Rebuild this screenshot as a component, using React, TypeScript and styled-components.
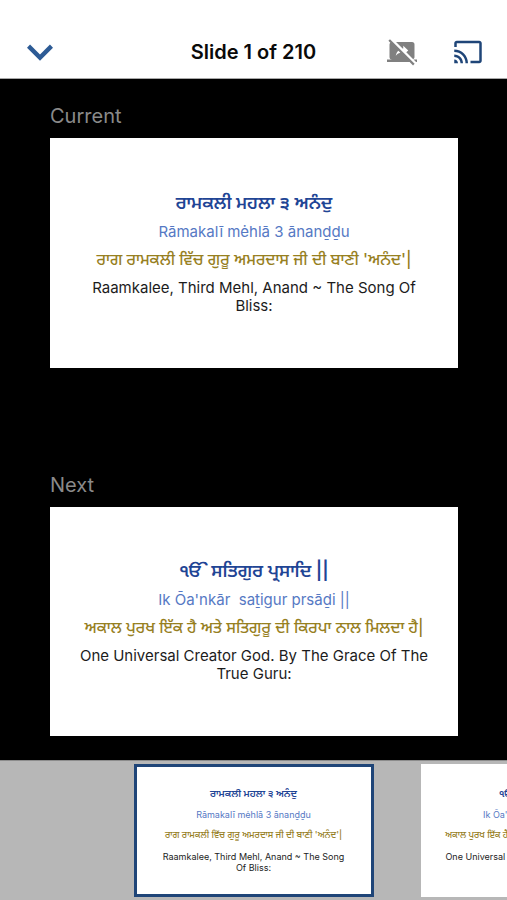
import React from "react";
import styled, { createGlobalStyle } from "styled-components";
import { MdCast, MdExpandMore, MdStopScreenShare } from "react-icons/md";

const GlobalStyle = createGlobalStyle`
  *, *::before, *::after { box-sizing: border-box; }
  body {
    margin: 0;
    background: #000;
    font-family: Inter, "Noto Sans", "Noto Sans Gurmukhi", sans-serif;
  }
`;

const Page = styled.main`
  display: flex;
  flex-direction: column;
  min-height: 100vh;
`;

const Header = styled.header`
  display: grid;
  grid-template-columns: 1fr auto 1fr;
  align-items: center;
  padding: 26px 14px 0;
  height: 79px;
  background: #fff;
  border-bottom: 1px solid #a8a8a8;
`;

const Title = styled.h1`
  margin: 0;
  font-size: 20px;
  line-height: 24px;
  font-weight: 600;
  color: #0a0a0a;
`;

const Actions = styled.div`
  display: flex;
  justify-content: flex-end;
  gap: 36px;
  padding-right: 10px;
`;

const IconButton = styled.button<{ $color: string }>`
  display: flex;
  justify-self: start;
  padding: 0;
  border: 0;
  background: none;
  color: ${(p) => p.$color};
  cursor: pointer;
`;

const Stage = styled.div`
  flex: 1;
  display: flex;
  flex-direction: column;
  justify-content: space-between;
  gap: 24px;
  padding: 25px 49px 24px 50px;
`;

const Preview = styled.section`
  display: flex;
  flex-direction: column;
  gap: 10px;
`;

const PreviewLabel = styled.h2`
  margin: 0;
  font-size: 20px;
  line-height: 24px;
  font-weight: 400;
  color: #8a8a8a;
`;

const SlideCard = styled.article`
  display: flex;
  flex-direction: column;
  justify-content: center;
  aspect-ratio: 16 / 9;
  padding: 0 24px;
  background: #fff;
  text-align: center;
`;

type Size = { $small?: boolean };

const Line = styled.p<Size>`
  margin: 0;
  font-size: ${(p) => (p.$small ? 9 : 15)}px;
  line-height: ${(p) => (p.$small ? 11 : 18)}px;
`;

const Gurmukhi = styled(Line)`
  font-size: ${(p) => (p.$small ? 10 : 18)}px;
  line-height: ${(p) => (p.$small ? 16 : 24)}px;
  font-weight: 600;
  color: #1f4595;
  white-space: nowrap;
`;

const Transliteration = styled(Line)`
  margin-top: 8px;
  color: #5679c4;
  white-space: pre-wrap;
`;

const Punjabi = styled(Gurmukhi)`
  margin-top: ${(p) => (p.$small ? 7 : 6)}px;
  font-size: ${(p) => (p.$small ? 9 : 16)}px;
  font-weight: 500;
  color: #97801f;
`;

const English = styled(Line)`
  margin-top: 8px;
  color: #1c1c1c;
`;

const Strip = styled.nav`
  display: flex;
  gap: 47px;
  padding: 3px 0 3px calc(50% - 120px);
  overflow: hidden;
  background: #b7b7b7;
  border-top: 1px solid #8c8c8c;
`;

const Thumb = styled.button<{ $selected?: boolean }>`
  flex: 0 0 240px;
  display: flex;
  flex-direction: column;
  justify-content: center;
  height: 133px;
  padding: 0 20px 4px;
  border: 3px solid ${(p) => (p.$selected ? "#1f4578" : "#fff")};
  background: #fff;
  font-family: inherit;
  text-align: center;
  cursor: pointer;
`;

interface Slide {
  gurmukhi: string;
  transliteration: string;
  punjabi: string;
  english: string;
}

const slides: Slide[] = [
  {
    gurmukhi: "ਰਾਮਕਲੀ ਮਹਲਾ ੩ ਅਨੰਦੁ",
    transliteration: "Rāmakalī mėhlā 3 ānanḏḏu",
    punjabi: "ਰਾਗ ਰਾਮਕਲੀ ਵਿੱਚ ਗੁਰੂ ਅਮਰਦਾਸ ਜੀ ਦੀ ਬਾਣੀ 'ਅਨੰਦ'|",
    english: "Raamkalee, Third Mehl, Anand ~ The Song Of Bliss:",
  },
  {
    gurmukhi: "ੴ ਸਤਿਗੁਰ ਪ੍ਰਸਾਦਿ ||",
    transliteration: "Ik Ōa'nkār  saṯigur prsāḏi ||",
    punjabi: "ਅਕਾਲ ਪੁਰਖ ਇੱਕ ਹੈ ਅਤੇ ਸਤਿਗੁਰੂ ਦੀ ਕਿਰਪਾ ਨਾਲ ਮਿਲਦਾ ਹੈ|",
    english: "One Universal Creator God. By The Grace Of The True Guru:",
  },
];

function SlideText({ slide, small }: { slide: Slide; small?: boolean }) {
  const tag = small ? "span" : "p";
  return (
    <>
      <Gurmukhi as={tag} lang="pa" $small={small}>{slide.gurmukhi}</Gurmukhi>
      <Transliteration as={tag} $small={small}>{slide.transliteration}</Transliteration>
      <Punjabi as={tag} lang="pa" $small={small}>{slide.punjabi}</Punjabi>
      <English as={tag} $small={small}>{slide.english}</English>
    </>
  );
}

export default function App() {
  return (
    <>
      <GlobalStyle />
      <Page>
        <Header>
          <IconButton $color="#2d5b95" aria-label="Close presenter">
            <MdExpandMore size={52} />
          </IconButton>
          <Title>Slide 1 of 210</Title>
          <Actions>
            <IconButton $color="#808080" aria-label="Stop screen share">
              <MdStopScreenShare size={30} />
            </IconButton>
            <IconButton $color="#1f4578" aria-label="Cast">
              <MdCast size={30} />
            </IconButton>
          </Actions>
        </Header>
        <Stage>
          {["Current", "Next"].map((label, i) => (
            <Preview key={label}>
              <PreviewLabel>{label}</PreviewLabel>
              <SlideCard>
                <SlideText slide={slides[i]} />
              </SlideCard>
            </Preview>
          ))}
        </Stage>
        <Strip aria-label="Slides">
          {slides.map((slide, i) => (
            <Thumb key={slide.gurmukhi} $selected={i === 0} aria-current={i === 0}>
              <SlideText slide={slide} small />
            </Thumb>
          ))}
        </Strip>
      </Page>
    </>
  );
}
